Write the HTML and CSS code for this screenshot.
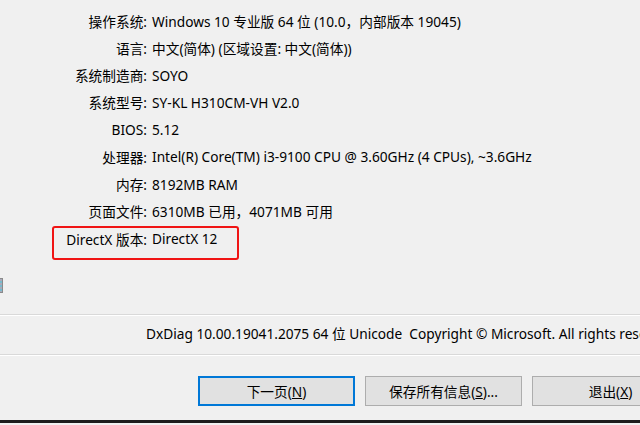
FILE: index.html
```html
<!DOCTYPE html>
<html lang="zh-CN">
<head>
    <meta charset="UTF-8">
    <title>DirectX 诊断工具</title>
    <link rel="stylesheet" href="styles.css">
</head>
<body>
    <div class="window">
        <div class="info">
            <span class="label">操作系统:</span><span class="value">Windows 10 专业版 64 位 (10.0，内部版本 19045)</span>
            <span class="label">语言:</span><span class="value">中文(简体) (区域设置: 中文(简体))</span>
            <span class="label">系统制造商:</span><span class="value">SOYO</span>
            <span class="label">系统型号:</span><span class="value">SY-KL H310CM-VH V2.0</span>
            <span class="label">BIOS:</span><span class="value">5.12</span>
            <span class="label">处理器:</span><span class="value">Intel(R) Core(TM) i3-9100 CPU @ 3.60GHz (4 CPUs), ~3.6GHz</span>
            <span class="label">内存:</span><span class="value">8192MB RAM</span>
            <span class="label">页面文件:</span><span class="value">6310MB 已用，4071MB 可用</span>
            <span class="label">DirectX 版本:</span><span class="value">DirectX 12</span>
        </div>
        <div class="highlight"></div>
        <div class="edge-icon"></div>

        <div class="rule"></div>
        <div class="version">DxDiag 10.00.19041.2075 64 位 Unicode&nbsp; Copyright © Microsoft. All rights reserved.</div>
        <div class="rule"></div>

        <div class="buttons">
            <button class="btn default">下一页(<u>N</u>)</button>
            <button class="btn">保存所有信息(<u>S</u>)...</button>
            <button class="btn">退出(<u>X</u>)</button>
        </div>
        <div class="taskbar"></div>
    </div>
</body>
</html>
```

FILE: styles.css
```css
* {
    margin: 0;
    padding: 0;
    box-sizing: border-box;
}

body {
    background: #f0f0f0;
    font-family: "Noto Sans", "Noto Sans CJK SC", sans-serif;
    font-size: 13.7px;
    color: #000;
    overflow: hidden;
}

.window {
    position: relative;
    width: 640px;
    height: 425px;
    overflow: hidden;
}

.info {
    display: grid;
    grid-template-columns: 147px 1fr;
    grid-auto-rows: 27.25px;
    column-gap: 5px;
    padding-top: 7px;
    height: 314px;
    align-items: center;
    white-space: nowrap;
}

.label {
    text-align: right;
}

.highlight {
    position: absolute;
    left: 52px;
    top: 226px;
    width: 187px;
    height: 34px;
    border: 2px solid #f01414;
    border-radius: 3px;
}

.edge-icon {
    position: absolute;
    left: -4px;
    top: 278px;
    width: 7px;
    height: 15px;
    border: 1px solid #8a8a8a;
    background: repeating-linear-gradient(#aab 0 2px, #7bc 2px 4px);
}

.rule {
    height: 2px;
    border-top: 1px solid #d9d9d9;
    border-bottom: 1px solid #fff;
}

.version {
    height: 38px;
    line-height: 36px;
    padding-left: 146px;
    white-space: nowrap;
}

.buttons {
    display: flex;
    gap: 10px;
    padding: 20px 0 0 198px;
    height: 64px;
}

.btn {
    flex: none;
    width: 157px;
    height: 30px;
    background: #e1e1e1;
    border: 1px solid #adadad;
    font-family: inherit;
    font-size: 13.7px;
    color: #000;
}

.btn.default {
    border: 2px solid #0078d7;
}

.taskbar {
    height: 3px;
    background: #1c1c1c;
}
```
